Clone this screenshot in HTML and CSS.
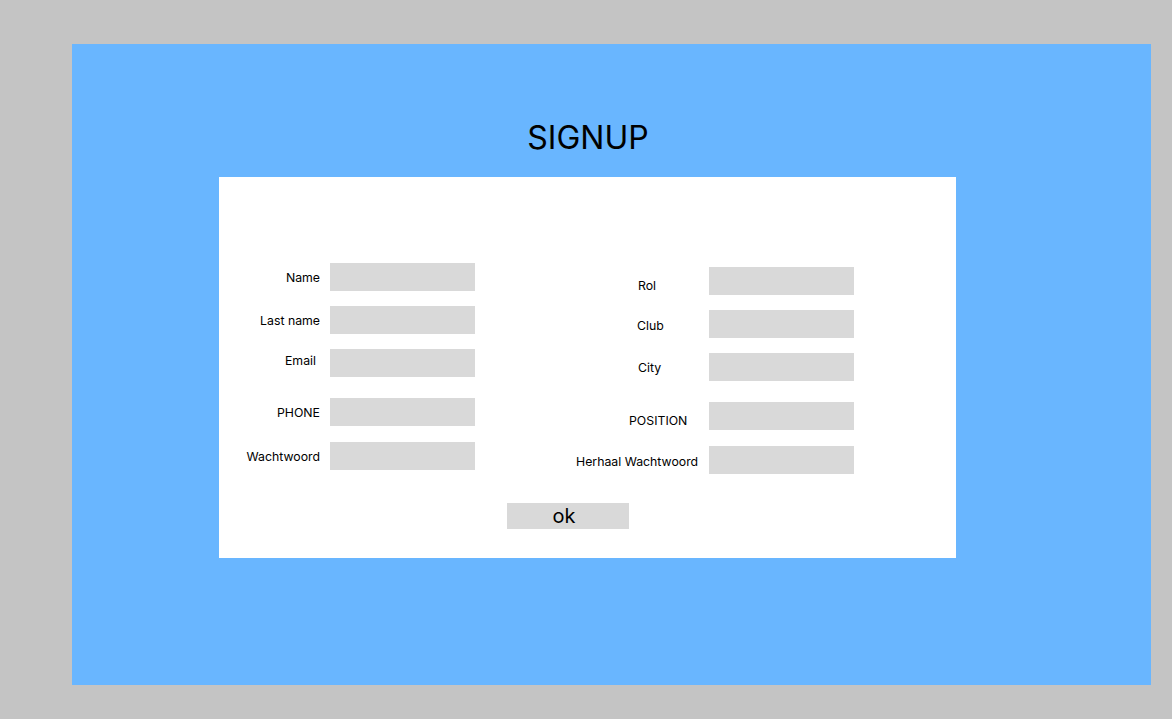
FILE: index.html
```html
<!DOCTYPE html>
<html lang="nl">
<head>
<meta charset="utf-8">
<title>Signup</title>
<link rel="stylesheet" href="styles.css">
</head>
<body>
<div class="page">
  <div class="panel">
    <h1 class="title">SIGNUP</h1>
    <form class="card">
      <div class="fields">
        <div class="col col-left">
          <div class="row"><label class="label-left">Name</label><input class="field" type="text"></div>
          <div class="row"><label class="label-left">Last name</label><input class="field" type="text"></div>
          <div class="row"><label class="label-left label-email">Email</label><input class="field" type="text"></div>
          <div class="row gap-lg"><label class="label-left">PHONE</label><input class="field" type="text"></div>
          <div class="row gap-md"><label class="label-left">Wachtwoord</label><input class="field" type="password"></div>
        </div>
        <div class="col col-right">
          <div class="row"><label class="label-right label-rol">Rol</label><input class="field" type="text"></div>
          <div class="row"><label class="label-right label-club">Club</label><input class="field" type="text"></div>
          <div class="row"><label class="label-right label-city">City</label><input class="field" type="text"></div>
          <div class="row gap-lg"><label class="label-right label-position">POSITION</label><input class="field" type="text"></div>
          <div class="row gap-md"><label class="label-right label-repeat">Herhaal Wachtwoord</label><input class="field" type="password"></div>
        </div>
      </div>
      <button class="ok" type="button">ok</button>
    </form>
  </div>
</div>
</body>
</html>
```
FILE: styles.css
```css
html, body {
  margin: 0;
  padding: 0;
}
body {
  background: #c4c4c4;
  font-family: Inter, "Noto Sans", sans-serif;
  color: #000;
}
.page {
  padding: 44px 0 0 72px;
}
.panel {
  width: 1079px;
  height: 641px;
  background: #69b6ff;
  padding: 74px 0 0 147px;
  box-sizing: border-box;
}
.title {
  width: 737px;
  margin: 0 0 19px;
  padding-left: 1px;
  box-sizing: border-box;
  font-size: 32px;
  line-height: 40px;
  font-weight: 400;
  text-align: center;
}
.card {
  display: block;
  width: 737px;
  height: 381px;
  margin: 0;
  background: #fff;
  padding-top: 86px;
  box-sizing: border-box;
}
.fields {
  display: flex;
  gap: 101px;
}
.col {
  display: flex;
  flex-direction: column;
}
.col-right {
  margin-top: 4px;
}
.row {
  display: flex;
  align-items: center;
  height: 28px;
  margin-top: 15px;
}
.row:first-child {
  margin-top: 0;
}
.row.gap-lg {
  margin-top: 21px;
}
.row.gap-md {
  margin-top: 16px;
}
.label-left, .label-right {
  font-size: 12.3px;
  line-height: 16px;
  white-space: nowrap;
  box-sizing: border-box;
  margin-top: 2px;
}
.label-left {
  width: 101px;
  margin-right: 10px;
  text-align: right;
}
.label-email {
  padding-right: 4px;
  margin-top: 0;
  margin-bottom: 4px;
}
.label-right {
  width: 133px;
  text-align: left;
}
.label-rol { padding-left: 62px; margin-top: 10px; }
.label-club { padding-left: 61px; margin-top: 4px; }
.label-city { padding-left: 62px; }
.label-position { padding-left: 53px; margin-top: 10px; }
.label-repeat { padding-left: 0; margin-top: 4px; }
.field {
  width: 145px;
  height: 28px;
  margin: 0;
  padding: 0;
  border: none;
  background: #d9d9d9;
  box-sizing: border-box;
  flex: none;
}
.ok {
  display: block;
  width: 122px;
  height: 26px;
  margin: 29px 0 0 288px;
  padding: 0 8px 0 0;
  border: none;
  background: #d9d9d9;
  font-family: Inter, "Noto Sans", sans-serif;
  font-size: 20px;
  line-height: 26px;
  color: #000;
}
```
